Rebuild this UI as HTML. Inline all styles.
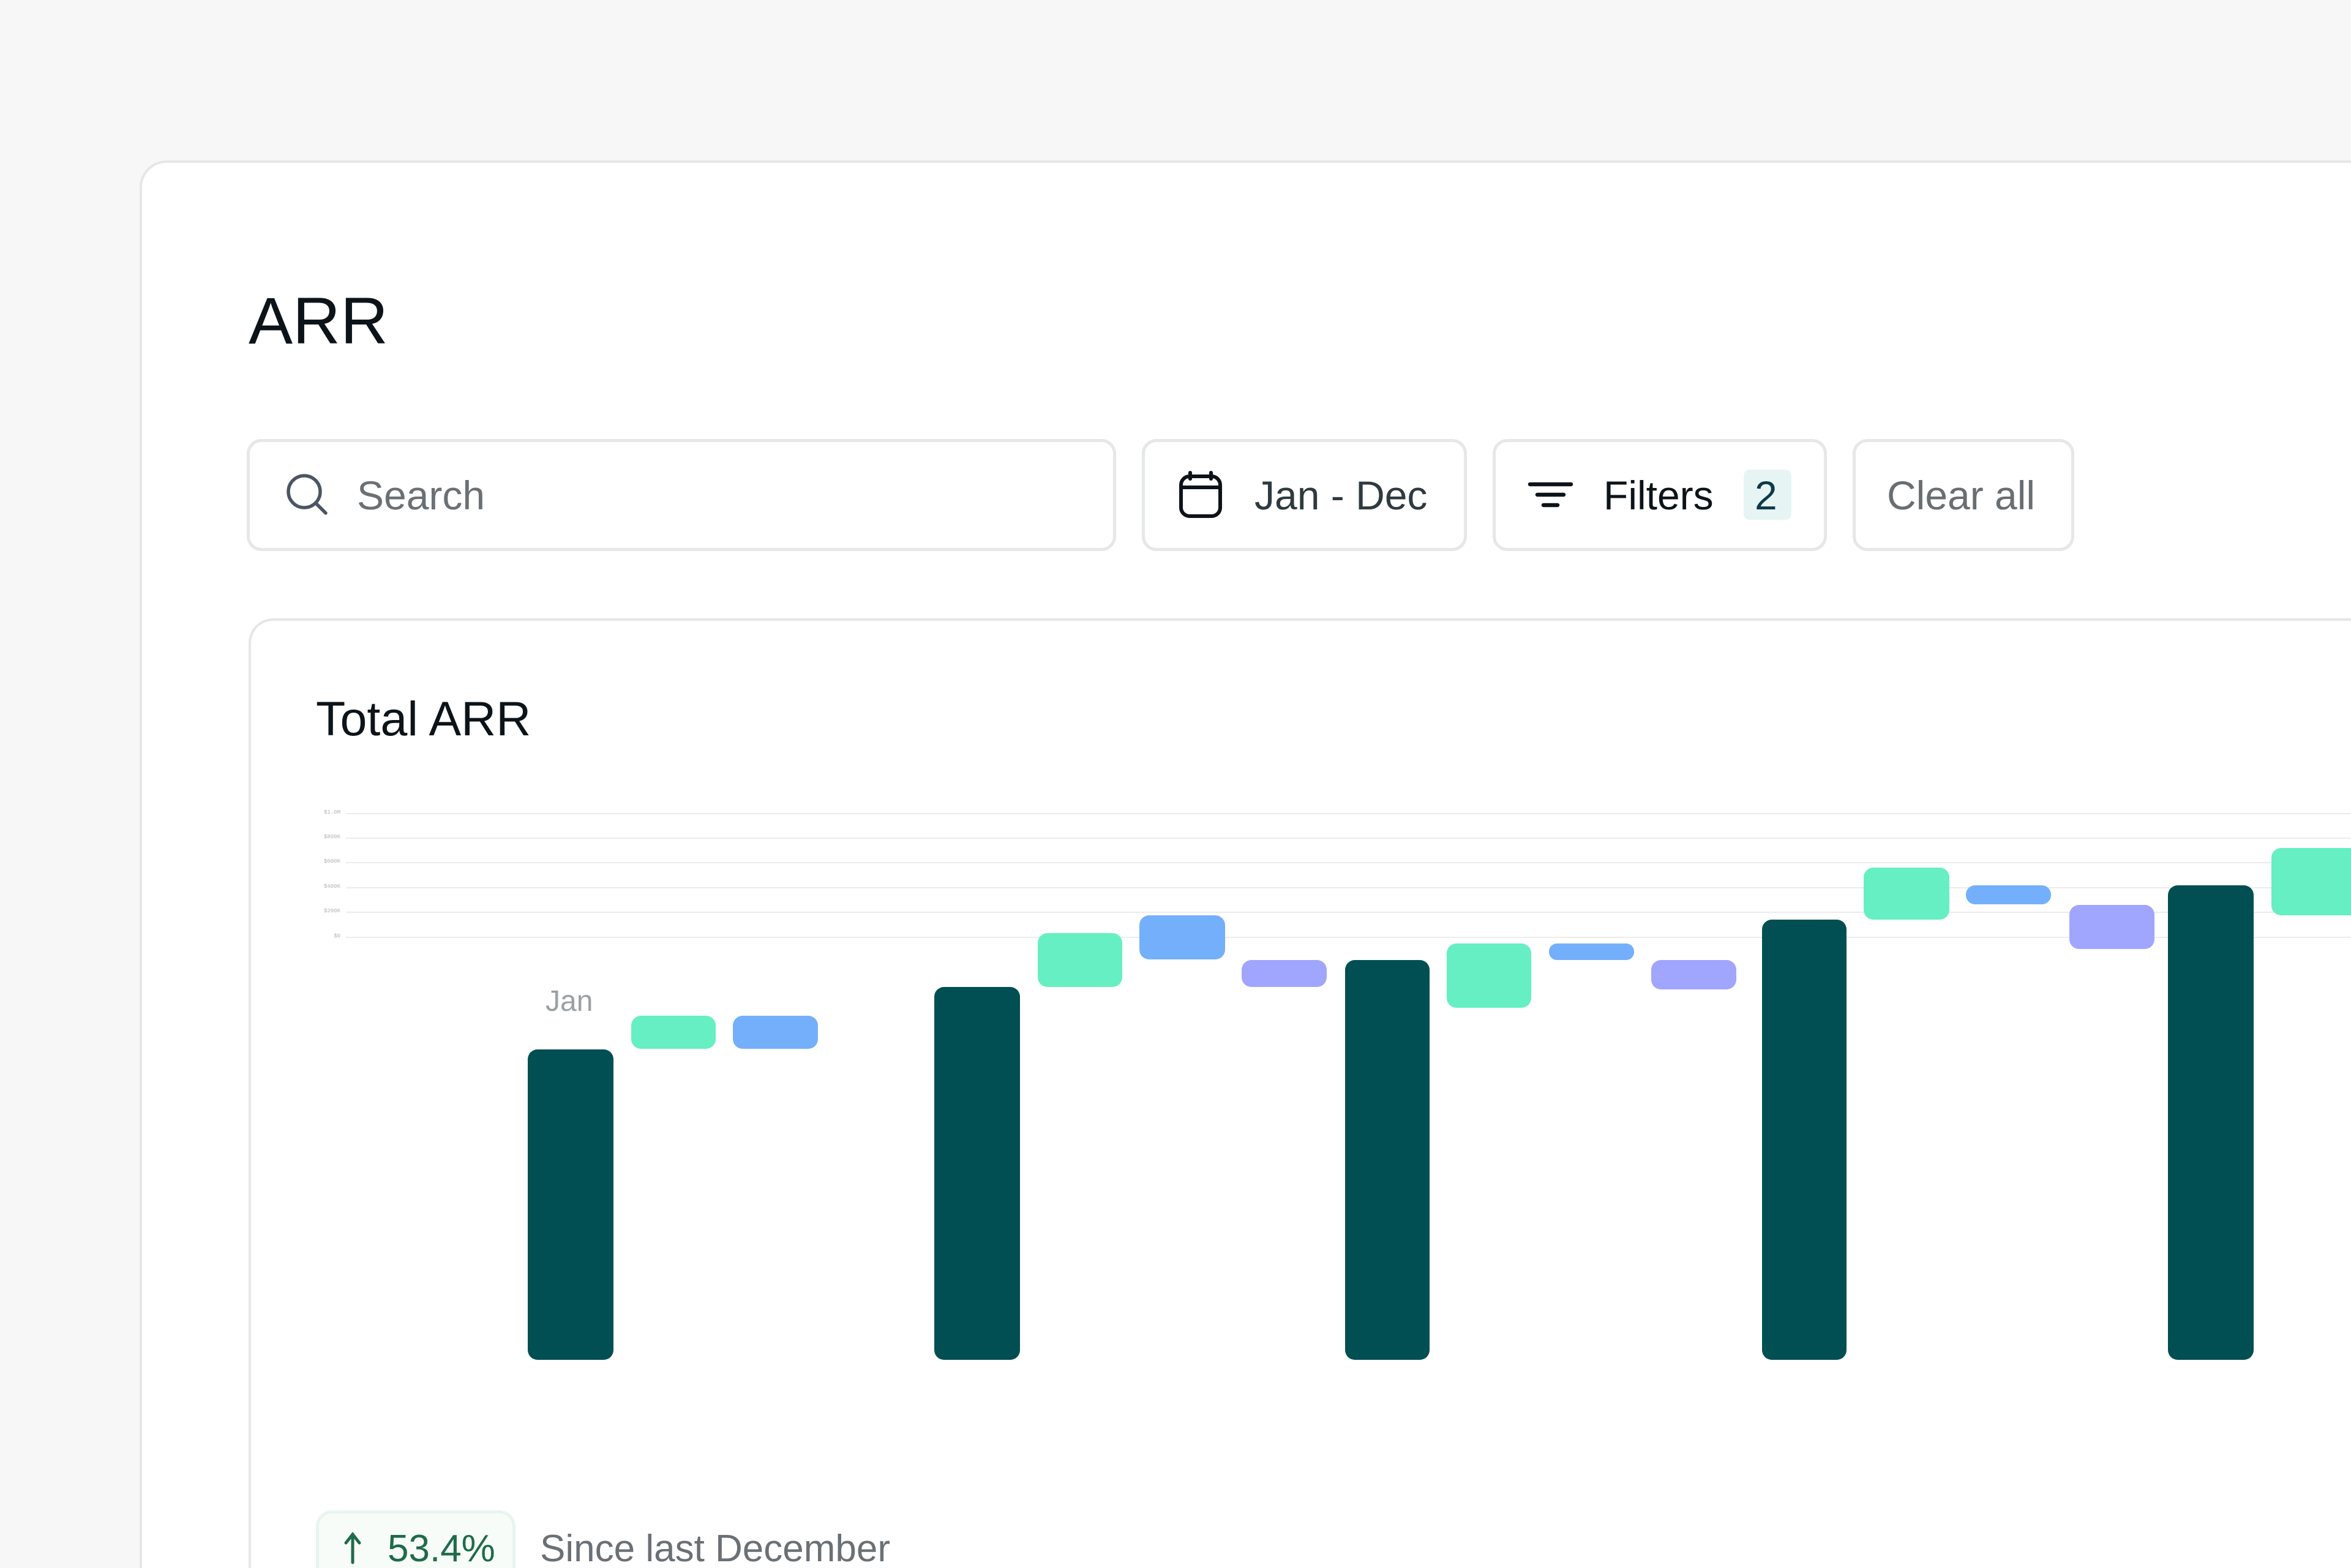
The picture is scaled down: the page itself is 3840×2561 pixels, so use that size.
<!DOCTYPE html>
<html style="overflow:hidden"><head><meta charset="utf-8"><style>
*{margin:0;padding:0;box-sizing:border-box}
html,body{width:3840px;height:2561px;overflow:hidden}
body{background:#f7f7f7;font-family:"Liberation Sans",sans-serif}
#w{position:relative;width:3840px;height:2561px;overflow:hidden}
.card{position:absolute;left:228px;top:262px;width:3612px;height:2299px;background:#fff;border:4px solid #e6e6e6;border-right:none;border-bottom:none;border-radius:44px 0 0 0}
.abs{position:absolute}
.box{position:absolute;top:717px;height:183px;border:5px solid #e6e7e8;border-radius:24px;background:#fff}
.t{position:absolute;font-size:66px;line-height:1;white-space:nowrap}
.inner{position:absolute;left:406px;top:1010px;width:3434px;height:1551px;border:4px solid #e6e6e6;border-right:none;border-bottom:none;border-radius:40px 0 0 0;background:#fff}
.g{position:absolute;left:565px;width:3275px;height:2px;background:#ececec}
.yl{position:absolute;left:500px;width:56px;text-align:right;font-family:"Liberation Mono",monospace;font-size:9px;color:#b0b4b8;line-height:1}
.b{position:absolute;border-radius:16px}
.d{background:#014f53}.gr{background:#66efc2}.bl{background:#74affb}.pu{background:#a0a5fd}
</style></head><body><div id="w">
<div class="card"></div>
<div class="t" style="left:406px;top:470px;font-size:108px;color:#0d1419">ARR</div>

<div class="box" style="left:403px;width:1420px"></div>
<svg class="abs" style="left:460px;top:770px" width="80" height="80" viewBox="0 0 80 80"><circle cx="37" cy="33" r="26" fill="none" stroke="#4b5563" stroke-width="5.5"/><line x1="56" y1="52" x2="72" y2="68" stroke="#4b5563" stroke-width="5.5" stroke-linecap="round"/></svg>
<div class="t" style="left:583px;top:776px;color:#6b7075">Search</div>

<div class="box" style="left:1865px;width:531px"></div>
<svg class="abs" style="left:1924px;top:768px" width="76" height="80" viewBox="0 0 76 80"><rect x="5" y="10" width="64" height="65" rx="14" fill="none" stroke="#0d1419" stroke-width="6"/><line x1="5" y1="28" x2="69" y2="28" stroke="#0d1419" stroke-width="6"/><line x1="20" y1="4" x2="20" y2="14" stroke="#0d1419" stroke-width="6" stroke-linecap="round"/><line x1="54" y1="4" x2="54" y2="14" stroke="#0d1419" stroke-width="6" stroke-linecap="round"/></svg>
<div class="t" style="left:2049px;top:776px;color:#2f3a40">Jan - Dec</div>

<div class="box" style="left:2438px;width:546px"></div>
<svg class="abs" style="left:2494px;top:782px" width="80" height="50" viewBox="0 0 80 50"><g stroke="#0d1419" stroke-width="6.5" stroke-linecap="round"><line x1="5" y1="9" x2="72" y2="9"/><line x1="17" y1="26" x2="60" y2="26"/><line x1="27" y1="43" x2="50" y2="43"/></g></svg>
<div class="t" style="left:2619px;top:776px;color:#0d1419">Filters</div>
<div class="abs" style="left:2848px;top:767px;width:78px;height:82px;background:#e6f5f4;border-radius:10px"></div>
<div class="t" style="left:2866px;top:776px;color:#0e3a4a">2</div>

<div class="box" style="left:3026px;width:362px"></div>
<div class="t" style="left:3082px;top:776px;color:#696e72">Clear all</div>

<div class="inner"></div>
<div class="t" style="left:516px;top:1134px;font-size:79px;color:#0d1419">Total ARR</div>

<div class="g" style="top:1328px"></div><div class="yl" style="top:1323px">$1.0M</div>
<div class="g" style="top:1368px"></div><div class="yl" style="top:1363px">$800K</div>
<div class="g" style="top:1408px"></div><div class="yl" style="top:1403px">$600K</div>
<div class="g" style="top:1449px"></div><div class="yl" style="top:1444px">$400K</div>
<div class="g" style="top:1489px"></div><div class="yl" style="top:1484px">$200K</div>
<div class="g" style="top:1530px"></div><div class="yl" style="top:1525px">$0</div>

<div class="t" style="left:891px;top:1612px;font-size:48px;color:#9aa0a3">Jan</div>

<div class="b d" style="left:862px;top:1714px;width:140px;height:507px"></div>
<div class="b gr" style="left:1031px;top:1659px;width:138px;height:54px"></div>
<div class="b bl" style="left:1197px;top:1659px;width:139px;height:54px"></div>
<div class="b d" style="left:1526px;top:1612px;width:140px;height:609px"></div>
<div class="b gr" style="left:1695px;top:1524px;width:138px;height:88px"></div>
<div class="b bl" style="left:1861px;top:1495px;width:140px;height:72px"></div>
<div class="b pu" style="left:2028px;top:1568px;width:139px;height:44px"></div>
<div class="b d" style="left:2197px;top:1568px;width:138px;height:653px"></div>
<div class="b gr" style="left:2363px;top:1541px;width:138px;height:105px"></div>
<div class="b bl" style="left:2530px;top:1541px;width:139px;height:27px;border-radius:13px"></div>
<div class="b pu" style="left:2697px;top:1568px;width:139px;height:48px"></div>
<div class="b d" style="left:2878px;top:1502px;width:138px;height:719px"></div>
<div class="b gr" style="left:3044px;top:1417px;width:140px;height:85px"></div>
<div class="b bl" style="left:3211px;top:1446px;width:139px;height:31px;border-radius:15px"></div>
<div class="b pu" style="left:3380px;top:1478px;width:139px;height:72px"></div>
<div class="b d" style="left:3541px;top:1446px;width:140px;height:775px"></div>
<div class="b gr" style="left:3710px;top:1385px;width:130px;height:110px;border-radius:16px 0 0 16px"></div>

<div class="abs" style="left:516px;top:2467px;width:326px;height:94px;background:#f7fcf9;border:5px solid #eaf4ee;border-bottom:none;border-radius:26px 26px 0 0"></div>
<svg class="abs" style="left:556px;top:2500px" width="40" height="56" viewBox="0 0 40 56"><g stroke="#1f6b48" stroke-width="5" stroke-linecap="round" fill="none"><line x1="20" y1="6" x2="20" y2="52"/><polyline points="9,20 20,6 31,20"/></g></svg>
<div class="t" style="left:633px;top:2499px;font-size:62px;line-height:62px;height:62px;color:#1f6b48">53.4%</div>
<div class="t" style="left:882px;top:2499px;font-size:62px;line-height:62px;height:62px;color:#6b7075">Since last December</div>
</div></body></html>
